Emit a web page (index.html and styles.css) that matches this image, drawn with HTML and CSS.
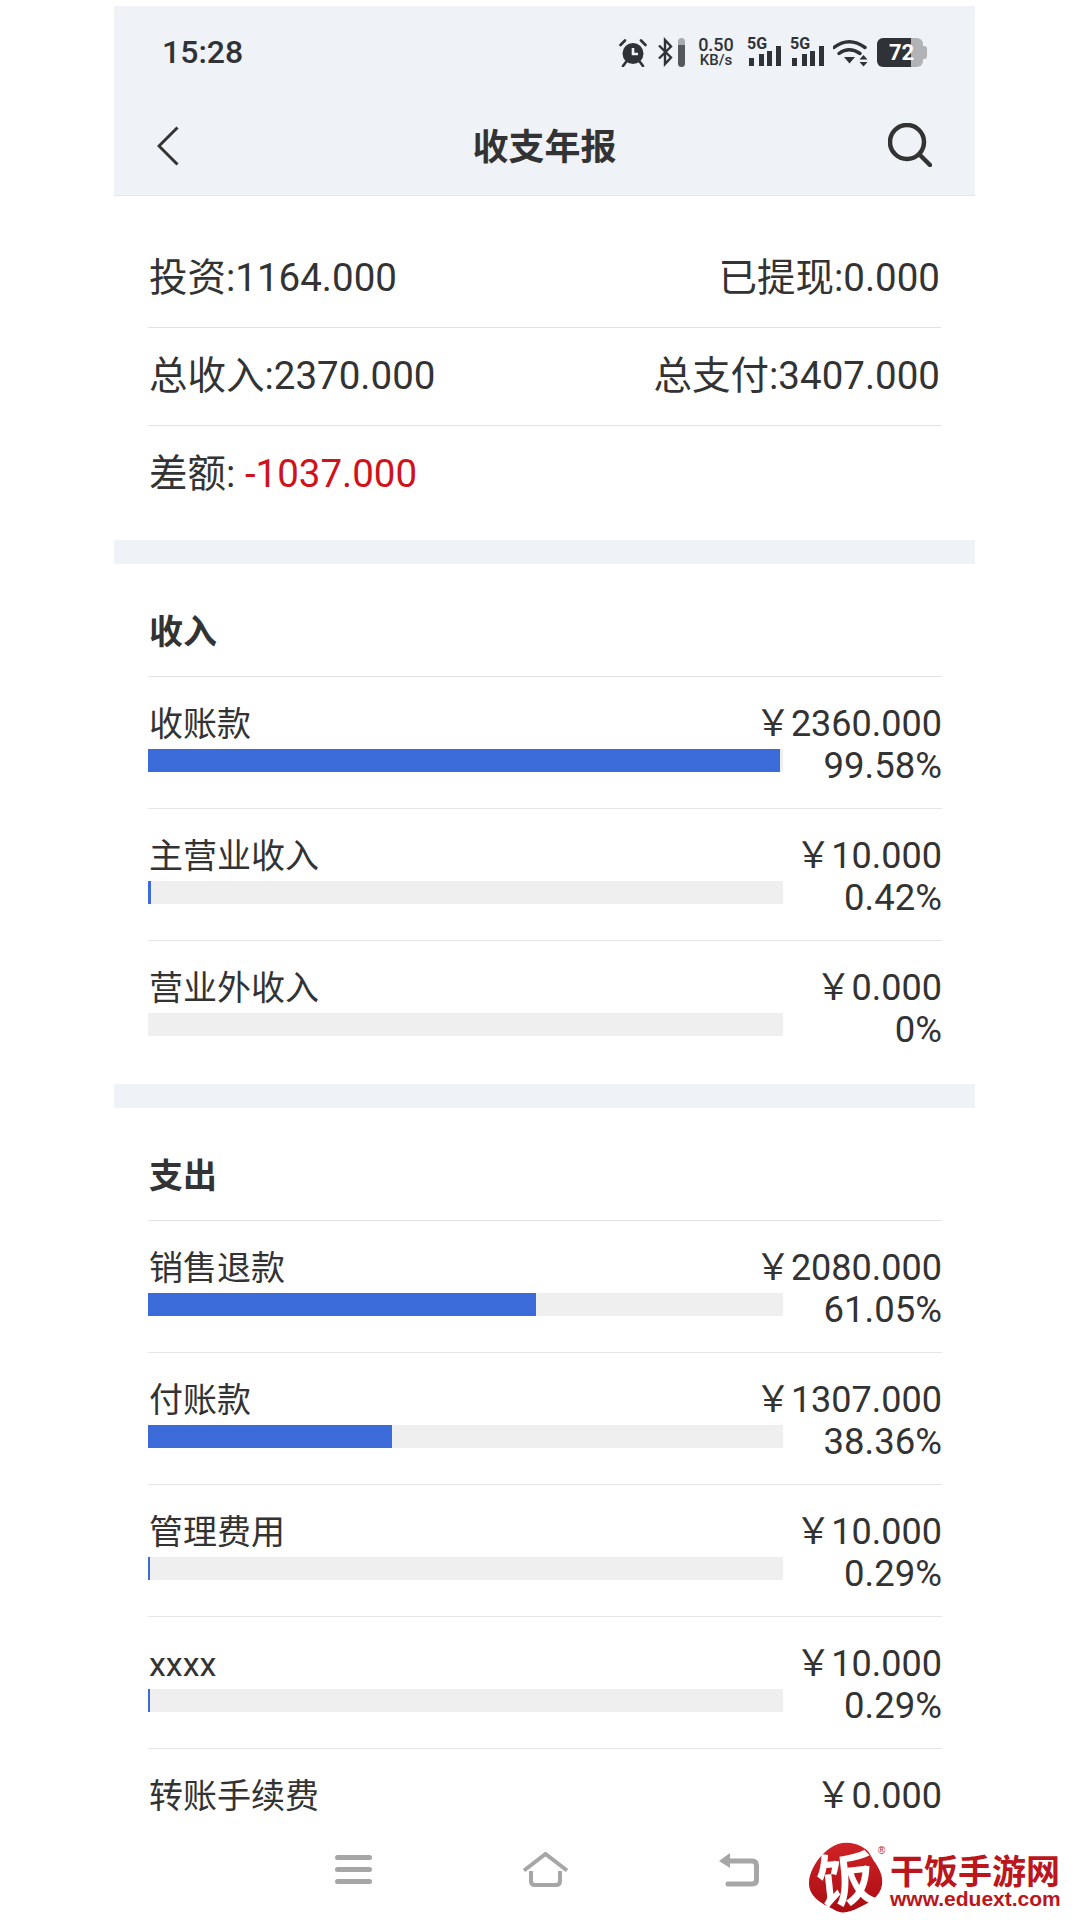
FILE: index.html
```html
<!DOCTYPE html>
<html lang="zh-CN">
<head>
    <meta charset="UTF-8">
    <meta name="viewport" content="width=device-width, initial-scale=1.0">
    <title>收支年报</title>
    <link rel="stylesheet" href="styles.css">
</head>
<body>
    <div class="screen">
        <header class="top">
            <div class="status">
                <span class="time">15:28</span>
                <div class="status-icons">
                    <svg class="ic-alarm" width="28" height="29" viewBox="0 0 28 29"><circle cx="14" cy="15.5" r="10.5" fill="#2f3237"/><path d="M14 10v6h5" fill="none" stroke="#eff2f7" stroke-width="2.6"/><path d="M1.5 7 6 2.5M26.5 7 22 2.5M7 24l-3 4M21 24l3 4" fill="none" stroke="#2f3237" stroke-width="2.6" stroke-linecap="round"/></svg>
                    <svg class="ic-bt" width="17" height="30" viewBox="0 0 17 30"><path d="M2 8.500 14 20.500 8 27V3l6 6.500L2 21.500" fill="none" stroke="#2f3237" stroke-width="2.4"/></svg>
                    <span class="ic-level"></span>
                    <div class="speed"><b>0.50</b><span>KB/s</span></div>
                    <svg class="ic-signal" width="35" height="30" viewBox="0 0 35 30"><text x="0" y="12" class="sig-text">5G</text><path d="M2 21h5v8H2zM12 17h5v12h-5zM20 14h5v15h-5zM29 9h5v20h-5z" fill="#2f3237"/></svg>
                    <svg class="ic-signal" width="35" height="30" viewBox="0 0 35 30"><text x="0" y="12" class="sig-text">5G</text><path d="M2 21h5v8H2zM12 17h5v12h-5zM20 14h5v15h-5zM29 9h5v20h-5z" fill="#2f3237"/></svg>
                    <svg class="ic-wifi" width="36" height="29" viewBox="0 0 36 29"><path d="M1 9.500Q16-2 32 9.500M6 15.500Q16 8 27 15.500" fill="none" stroke="#2f3237" stroke-width="3.400" stroke-linecap="round"/><path d="M11 19h11l-5.500 6.500zM26.500 21.500l4-4.500 4 4.500zM26.500 24l4 4.500 4-4.500z" fill="#2f3237"/></svg>
                    <div class="battery">72</div>
                </div>
            </div>
            <div class="navbar">
                <svg class="ic-back" width="22" height="40" viewBox="0 0 22 40"><path d="M20.500 1.500 2 20l18.500 18.500" fill="none" stroke="#333" stroke-width="3"/></svg>
                <h1>收支年报</h1>
                <svg class="ic-search" width="44" height="44" viewBox="0 0 44 44"><circle cx="19" cy="19" r="17" fill="none" stroke="#333" stroke-width="4.500"/><path d="M32 32l10 10" stroke="#333" stroke-width="4.500" stroke-linecap="round"/></svg>
            </div>
        </header>

        <section class="summary">
            <div class="sum-row"><span>投资:1164.000</span><span>已提现:0.000</span></div>
            <div class="sum-row"><span>总收入:2370.000</span><span>总支付:3407.000</span></div>
            <div class="sum-row last"><span>差额: <em class="neg">-1037.000</em></span></div>
        </section>

        <div class="gap"></div>

        <section class="block">
            <h2>收入</h2>
            <div class="row">
                <div class="line"><span class="name">收账款</span><span class="amount">￥2360.000</span></div>
                <div class="line"><div class="track"><div class="fill" style="width:99.58%"></div></div><span class="pct">99.58%</span></div>
            </div>
            <div class="row">
                <div class="line"><span class="name">主营业收入</span><span class="amount">￥10.000</span></div>
                <div class="line"><div class="track"><div class="fill" style="width:0.42%"></div></div><span class="pct">0.42%</span></div>
            </div>
            <div class="row end">
                <div class="line"><span class="name">营业外收入</span><span class="amount">￥0.000</span></div>
                <div class="line"><div class="track"></div><span class="pct">0%</span></div>
            </div>
        </section>

        <div class="gap"></div>

        <section class="block">
            <h2>支出</h2>
            <div class="row">
                <div class="line"><span class="name">销售退款</span><span class="amount">￥2080.000</span></div>
                <div class="line"><div class="track"><div class="fill" style="width:61.05%"></div></div><span class="pct">61.05%</span></div>
            </div>
            <div class="row">
                <div class="line"><span class="name">付账款</span><span class="amount">￥1307.000</span></div>
                <div class="line"><div class="track"><div class="fill" style="width:38.36%"></div></div><span class="pct">38.36%</span></div>
            </div>
            <div class="row">
                <div class="line"><span class="name">管理费用</span><span class="amount">￥10.000</span></div>
                <div class="line"><div class="track"><div class="fill" style="width:0.29%"></div></div><span class="pct">0.29%</span></div>
            </div>
            <div class="row">
                <div class="line"><span class="name">xxxx</span><span class="amount">￥10.000</span></div>
                <div class="line"><div class="track"><div class="fill" style="width:0.29%"></div></div><span class="pct">0.29%</span></div>
            </div>
            <div class="row end">
                <div class="line"><span class="name">转账手续费</span><span class="amount">￥0.000</span></div>
            </div>
        </section>

        <nav class="bottom">
            <svg width="37" height="29" viewBox="0 0 37 29"><path d="M2.500 2.500h32M2.500 14.500h32M2.500 26.500h32" stroke="#a6a6a6" stroke-width="5" stroke-linecap="round"/></svg>
            <svg width="47" height="35" viewBox="0 0 47 35"><path d="M2 18.500 23.500 2 45 18.500" fill="none" stroke="#a6a6a6" stroke-width="4"/><path d="M9 19v10q0 4 4 4h21q4 0 4-4V19" fill="none" stroke="#a6a6a6" stroke-width="4"/></svg>
            <svg width="40" height="35" viewBox="0 0 40 35"><path d="M9 9h24q4.500 0 4.500 4.500V28q0 4-4.500 4H9" fill="none" stroke="#a6a6a6" stroke-width="5" stroke-linecap="round"/><path d="M0 9 11 1v15z" fill="#a6a6a6"/></svg>
        </nav>
    </div>

    <div class="logo">
        <svg class="logo-mark" width="80" height="74" viewBox="0 0 80 74">
            <defs><linearGradient id="red" x1="0" y1="0" x2="0" y2="1"><stop offset="0" stop-color="#cf2327"/><stop offset="1" stop-color="#a90d12"/></linearGradient></defs>
            <path d="M30 2C44-2 58 5 62 12c4 9 14 17 12 31-2 12-13 18-24 23-8 4-17 7-25 1C14 62 0 54 1 40 2 26 14 8 30 2Z" fill="url(#red)"/>
            <text x="38" y="59" class="logo-glyph" text-anchor="middle" transform="rotate(-6 38 40)">饭</text>
            <text x="70" y="12" class="logo-reg">®</text>
        </svg>
        <div class="logo-text">
            <div class="logo-cn">干饭手游网</div>
            <div class="logo-url">www.eduext.com</div>
        </div>
    </div>
</body>
</html>
```

FILE: styles.css
```css
* { margin: 0; padding: 0; box-sizing: border-box; }
html, body { height: 1920px; overflow: hidden; }
body {
    background: white;
    font-family: Roboto, "Noto Sans CJK SC", sans-serif;
    color: #333;
    position: relative;
}
.screen {
    width: 861px; height: 1914px;
    margin: 6px 0 0 114px;
    position: relative; overflow: hidden;
}

/* top */
.top { background: #eff2f7; border-bottom: 1px solid #e4e5e7; height: 190px; }
.status {
    height: 92px; padding: 0 52px 0 48px;
    display: flex; align-items: center; justify-content: space-between;
}
.time { font-size: 32px; font-weight: 500; color: #2f3237; }
.status-icons { display: flex; align-items: center; }
.ic-bt { margin-left: 10px; }
.ic-level {
    width: 7px; height: 29px; margin-left: 4px; border-radius: 4px;
    background: linear-gradient(to bottom, #a9abae 25%, #55585c 25%);
}
.speed {
    margin-left: 12px; width: 38px; color: #2f3237;
    display: flex; flex-direction: column; align-items: center;
}
.speed b { font-size: 18px; line-height: 16px; font-weight: 500; }
.speed span { font-size: 15px; line-height: 14px; font-weight: 500; }
.ic-signal { margin-left: 12px; overflow: visible; }
.ic-signal + .ic-signal { margin-left: 8px; }
.sig-text { font: 700 16px Roboto, sans-serif; fill: #2f3237; }
.ic-wifi { margin-left: 8px; }
.battery {
    width: 46px; height: 29px; margin-left: 8px; position: relative;
    border-radius: 6px;
    background: linear-gradient(to right, #2f3237 34px, #b2b3b7 34px);
    color: white; font-size: 22px; line-height: 29px; font-weight: 700;
    padding-left: 12px;
}
.battery::after {
    content: ""; position: absolute; right: -4px; top: 8px;
    width: 4px; height: 13px; border-radius: 0 3px 3px 0;
    background: #b2b3b7;
}
.navbar {
    height: 97px; padding: 0 43px;
    display: grid; grid-template-columns: 1fr auto 1fr; align-items: center;
}
.navbar h1 {
    font-size: 36px; font-weight: 700; color: #333; margin-bottom: 6px;
    font-family: "Noto Sans CJK SC", sans-serif;
}
.ic-back { margin-bottom: 2px; }
.ic-search { justify-self: end; margin-bottom: 3px; }

/* summary */
.summary { padding: 34px 34px 16px; }
.sum-row {
    height: 98px; padding: 0 1px 10px 1px;
    border-bottom: 1px solid #e2e2e2;
    display: flex; align-items: center; justify-content: space-between;
    font-size: 38.5px;
}
.sum-row.last { border-bottom: none; }
.neg { color: #d0121b; font-style: normal; }
.gap { height: 24px; background: #eff2f7; }

/* lists */
.block { padding: 0 33px 0 34px; }
.block h2 {
    height: 113px; padding: 19px 0 0 1px;
    display: flex; align-items: center;
    border-bottom: 1px solid #e2e2e2;
    font-size: 34px; font-weight: 700;
    font-family: "Noto Sans CJK SC", sans-serif;
}
.row {
    height: 132px; padding-top: 26px;
    border-bottom: 1px solid #e6e6e6;
}
.row.end { border-bottom: none; height: 143px; }
.line {
    display: flex; justify-content: space-between; align-items: flex-start;
    height: 42px; line-height: 42px;
}
.name { font-size: 34px; padding-left: 1px; }
.amount { font-size: 36px; white-space: nowrap; }
.pct { font-size: 36.5px; white-space: nowrap; }
.track { width: 635px; height: 23px; margin-top: 4px; background: #efefef; }
.fill { height: 100%; background: #3b6bd8; }

/* bottom bar over the list */
.bottom {
    position: absolute; left: 0; right: 0; bottom: 0; height: 94px;
    background: white;
    display: flex; align-items: center; gap: 150px;
    padding: 0 0 7px 221px;
}

/* watermark */
.logo {
    position: absolute; left: 808px; top: 1842px;
    display: flex; align-items: flex-start; gap: 2px;
}
.logo-mark { overflow: visible; flex: none; }
.logo-glyph { font: 700 58px "Noto Sans CJK SC", sans-serif; fill: white; }
.logo-reg { font: 400 10px "Liberation Sans", sans-serif; fill: #b8151b; }
.logo-text { color: #bb161c; font-weight: 700; margin-top: 10px; width: 172px; }
.logo-cn { font-size: 34px; line-height: 36px; white-space: nowrap; font-family: "Noto Sans CJK SC", sans-serif; }
.logo-url { font: 700 21px/22px "Liberation Sans", sans-serif; white-space: nowrap; }
```
